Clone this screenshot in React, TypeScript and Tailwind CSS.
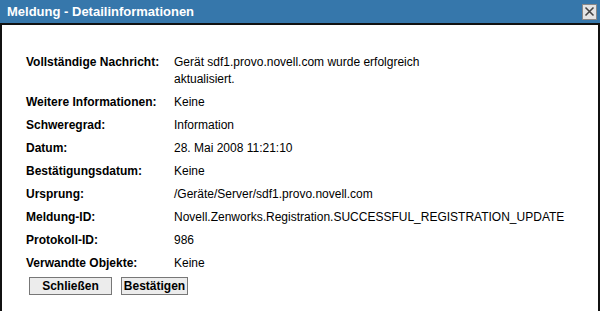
import React from 'react';

const rows: [string, string][] = [
  ['Vollständige Nachricht:', 'Gerät sdf1.provo.novell.com wurde erfolgreich aktualisiert.'],
  ['Weitere Informationen:', 'Keine'],
  ['Schweregrad:', 'Information'],
  ['Datum:', '28. Mai 2008 11:21:10'],
  ['Bestätigungsdatum:', 'Keine'],
  ['Ursprung:', '/Geräte/Server/sdf1.provo.novell.com'],
  ['Meldung-ID:', 'Novell.Zenworks.Registration.SUCCESSFUL_REGISTRATION_UPDATE'],
  ['Protokoll-ID:', '986'],
  ['Verwandte Objekte:', 'Keine'],
];

export default function App() {
  return (
    <div className="w-[601px] h-[311px] bg-white overflow-hidden text-black" style={{ fontFamily: '"Liberation Sans", Arial, sans-serif' }}>
      <div className="w-[600px] h-[311px] border-x-2 border-[#111] flex flex-col">
        {/* title bar */}
        <div className="h-[25px] -mx-[2px] bg-[#3677ab] border-b-2 border-[#111] flex items-center justify-between pl-[7px] pr-[3px]">
          <span className="text-white font-bold text-[13px]">Meldung - Detailinformationen</span>
          <button className="w-[15px] h-[16px] bg-[#e4e4e4] border border-[#888] flex items-center justify-center">
            <svg width="11" height="11" viewBox="0 0 11 11">
              <path d="M1.5 1.5 L9.5 9.5 M9.5 1.5 L1.5 9.5" stroke="#444" strokeWidth="1.6" />
            </svg>
          </button>
        </div>

        <div className="pl-[24px] pt-[26px] text-[12px]">
          <div className="grid grid-cols-[148px_300px]">
            {rows.map(([label, value]) => (
              <React.Fragment key={label}>
                <div className="font-bold leading-[17px] py-[3px]">{label}</div>
                <div className="leading-[17px] py-[3px] whitespace-normal">{value}</div>
              </React.Fragment>
            ))}
          </div>
          <div className="flex gap-[9px] mt-[2px] pl-[3px]">
            <button className="w-[83px] h-[18px] bg-[#ececec] border border-[#777] text-[12px] font-bold leading-none">Schließen</button>
            <button className="w-[67px] h-[18px] bg-[#ececec] border border-[#777] text-[12px] font-bold leading-none">Bestätigen</button>
          </div>
        </div>
      </div>
    </div>
  );
}
